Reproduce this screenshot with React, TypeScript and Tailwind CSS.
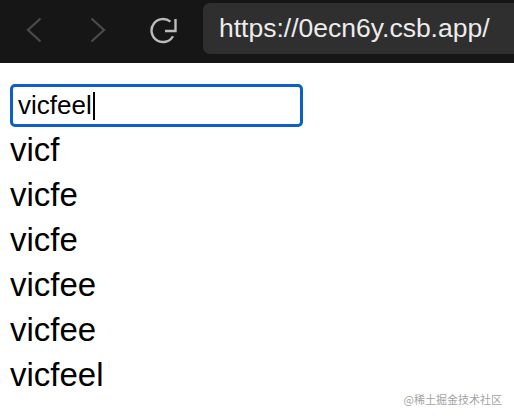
import { useState } from 'react'

const history = ['vicf', 'vicfe', 'vicfe', 'vicfee', 'vicfee', 'vicfeel']

function BrowserBar() {
  return (
    <div className="flex h-[63px] bg-[#161616]">
      <div className="flex h-[60px] items-center pl-[26px]">
        <svg width="16" height="26" viewBox="0 0 16 26" fill="none" stroke="#4b4b4b" strokeWidth="2.2">
          <path d="M14.5 1.5 2 13l12.5 11.5" />
        </svg>
        <svg className="ml-[48px]" width="16" height="26" viewBox="0 0 16 26" fill="none" stroke="#4b4b4b" strokeWidth="2.2">
          <path d="M1.5 1.5 14 13 1.5 24.5" />
        </svg>
        <svg className="ml-[43px]" width="29" height="28" viewBox="0 0 29 28" fill="none" stroke="#bcbcbc" strokeWidth="2.4">
          <path d="M21.4 5.7A11.5 11.5 0 1 0 24 20.25" />
          <path d="M26.5 3v12H16" />
        </svg>
      </div>
      <div className="ml-[25px] mt-[3px] flex h-[51px] flex-1 items-center rounded-l-[7px] bg-[#2f2f2f] pl-[16px] text-[26.5px] text-[#ececec]">
        https://0ecn6y.csb.app/
      </div>
    </div>
  )
}

export default function App() {
  const [value, setValue] = useState('vicfeel')

  return (
    <div className="relative h-[418px] overflow-hidden bg-white font-['Liberation_Sans',Arial,sans-serif]">
      <BrowserBar />
      <div className="pl-[10px] pt-[21px]">
        {/* focused field: the caret is drawn so it shows in a still picture */}
        <label className="flex h-[43px] w-[293px] items-center rounded-[5px] border-[3px] border-[#0b5fc6] px-[5px]">
          <input
            value={value}
            onChange={(e) => setValue(e.target.value)}
            className="field-sizing-content p-0 text-[26px] text-black caret-transparent outline-none"
          />
          <span className="ml-[1px] h-[28px] w-[2px] bg-black" />
        </label>
        <ul className="text-[33px] leading-[45px] text-black">
          {history.map((item, i) => (
            <li key={i}>{item}</li>
          ))}
        </ul>
      </div>
      <div className="absolute bottom-[12px] right-[12px] font-['Noto_Sans_CJK_SC',sans-serif] text-[11px] leading-[14px] text-[#a3a3a3]">
        @稀土掘金技术社区
      </div>
    </div>
  )
}
